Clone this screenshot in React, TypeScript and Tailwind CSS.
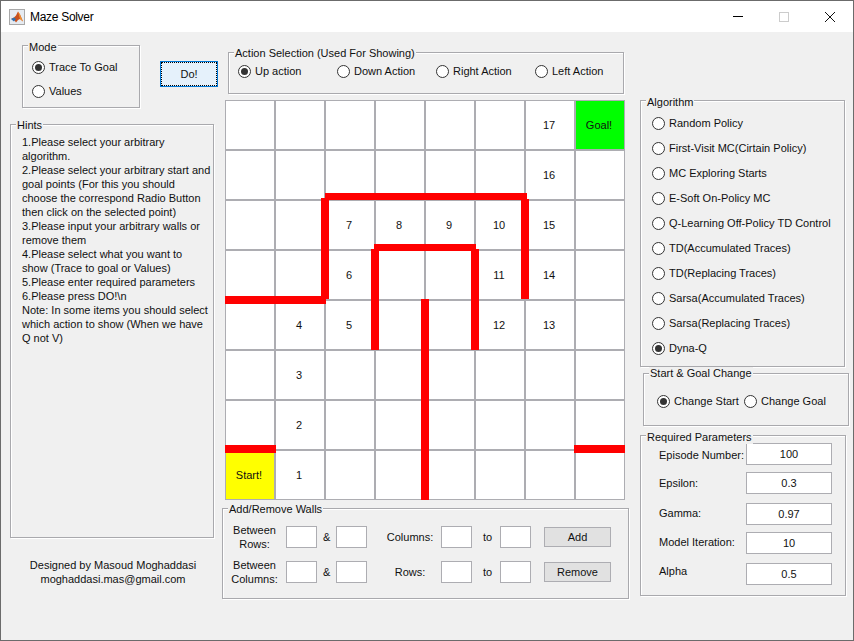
import type { ReactNode } from 'react';

const ALGORITHMS = [
  'Random Policy',
  'First-Visit MC(Cirtain Policy)',
  'MC Exploring Starts',
  'E-Soft On-Policy MC',
  'Q-Learning Off-Policy TD Control',
  'TD(Accumulated Traces)',
  'TD(Replacing Traces)',
  'Sarsa(Accumulated Traces)',
  'Sarsa(Replacing Traces)',
  'Dyna-Q',
];

const HINTS = [
  '1.Please select your arbitrary',
  'algorithm.',
  '2.Please select your arbitrary start and',
  'goal points (For this you should',
  'choose the correspond Radio Button',
  'then click on the selected point)',
  '3.Please input your arbitrary walls or',
  'remove them',
  '4.Please select what you want to',
  'show (Trace to goal or Values)',
  '5.Please enter required parameters',
  '6.Please press DO!\\n',
  'Note: In some items you should select',
  'which action to show (When we have',
  'Q not V)',
];

const PARAMS = [
  { label: 'Episode Number:', value: '100', row: 'h-[29px]', text: 'translate-y-px' },
  { label: 'Epsilon:', value: '0.3', row: 'h-[31px]', text: '' },
  { label: 'Gamma:', value: '0.97', row: 'h-[29px]', text: '-translate-y-px' },
  { label: 'Model Iteration:', value: '10', row: 'h-[31px]', text: '-translate-y-px' },
  { label: 'Alpha', value: '0.5', row: 'h-[22px]', text: '-translate-y-[3px]' },
];

const CELLS: Record<number, string> = {
  6: '17',
  7: 'Goal!',
  14: '16',
  18: '7',
  19: '8',
  20: '9',
  21: '10',
  22: '15',
  26: '6',
  29: '11',
  30: '14',
  33: '4',
  34: '5',
  37: '12',
  38: '13',
  41: '3',
  49: '2',
  56: 'Start!',
  57: '1',
};

// red walls drawn over the maze buttons, offsets from the grid corner
const WALLS = [
  { key: 'a', cls: 'left-[100px] top-[93px] w-[202px] h-[7px]' },
  { key: 'b', cls: 'left-[96px] top-[98px] w-2 h-[101px]' },
  { key: 'c', cls: 'left-0 top-[196px] w-[101px] h-2' },
  { key: 'd', cls: 'left-[296px] top-[99px] w-2 h-[100px]' },
  { key: 'e', cls: 'left-[149px] top-[144px] w-[102px] h-[7px]' },
  { key: 'f', cls: 'left-[146px] top-[149px] w-2 h-[101px]' },
  { key: 'g', cls: 'left-[246px] top-[149px] w-2 h-[101px]' },
  { key: 'h', cls: 'left-[196px] top-[199px] w-2 h-[201px]' },
  { key: 'i', cls: 'left-0 top-[345px] w-[51px] h-2' },
  { key: 'j', cls: 'left-[349px] top-[345px] w-[51px] h-2' },
];

function Panel({
  title,
  className,
  inner,
  drop,
  children,
}: {
  title: string;
  className: string;
  inner: string;
  drop: string;
  children: ReactNode;
}) {
  return (
    <fieldset className={`min-w-0 border border-[#a9a9ad] shadow-[1px_1px_0_#fff,inset_1px_1px_0_#fff] ${className}`}>
      <legend className={`ml-[5px] bg-[#f0f0f0] px-px text-[11px] leading-[13px] ${drop}`}>{title}</legend>
      <div className={inner}>{children}</div>
    </fieldset>
  );
}

function Radio({ label, checked, className = '' }: { label: string; checked?: boolean; className?: string }) {
  return (
    <div className={`flex items-center gap-[4px] ${className}`}>
      <span className="flex h-[13px] w-[13px] shrink-0 items-center justify-center rounded-full border border-[#333] bg-white">
        {checked && <span className="h-[7px] w-[7px] rounded-full bg-[#333]" />}
      </span>
      <span className="whitespace-nowrap">{label}</span>
    </div>
  );
}

function Box({ value = '', className = '' }: { value?: string; className?: string }) {
  return (
    <input
      readOnly
      value={value}
      className={`h-[22px] min-w-0 border border-[#adadb2] bg-white text-center text-[11px] outline-none ${className}`}
    />
  );
}

function Maze() {
  return (
    <div className="relative grid h-[400px] w-[400px] grid-cols-[repeat(8,50px)] grid-rows-[repeat(8,50px)]">
      {Array.from({ length: 64 }, (_, i) => {
        const text = CELLS[i] ?? '';
        const bg = text === 'Goal!' ? 'bg-[#00ff00]' : text === 'Start!' ? 'bg-[#ffff00]' : 'bg-white';
        return (
          <div key={i} className={`flex items-center justify-center border border-[#adadb2] pr-[2px] ${bg}`}>
            {text}
          </div>
        );
      })}
      {WALLS.map((w) => (
        <div key={w.key} className={`absolute bg-[#ff0000] ${w.cls}`} />
      ))}
    </div>
  );
}

function WallRow({ lines, second, button }: { lines: string[]; second: string; button: string }) {
  return (
    <div className="grid h-[22px] grid-cols-[63px_31px_19px_31px_74px_31px_28px_31px_13px_67px] items-center">
      <div className="text-center leading-[14px]">
        {lines.map((l) => (
          <div key={l}>{l}</div>
        ))}
      </div>
      <Box />
      <div className="pl-[6px]">&amp;</div>
      <Box />
      <div className="pl-3 text-center">{second}</div>
      <Box />
      <div className="pl-[11px]">to</div>
      <Box />
      <div />
      <div className="flex h-[20px] items-center justify-center border border-[#adadb2] bg-[#e1e1e1] pt-px">
        {button}
      </div>
    </div>
  );
}

export default function App() {
  return (
    <div
      className="flex h-[641px] w-[854px] flex-col overflow-hidden border border-[#6b6b6b] bg-[#f0f0f0] text-[11px] text-[#111]"
      style={{ fontFamily: '"Liberation Sans", Arial, sans-serif' }}
    >
      <div className="flex h-[31px] shrink-0 items-center bg-white pl-[8px]">
        <svg width="16" height="16" viewBox="0 0 16 16" className="shrink-0">
          <rect x="0.5" y="0.5" width="15" height="15" fill="#e6ebf1" stroke="#a8a8a8" />
          <path d="M2 10l3-1.5 2-2 2-4 2 3 3 7-3-2.5-2 1-2 2.5-2-3z" fill="#c8501e" />
          <path d="M2 10l3-1.5 2 1.5-2 2.5z" fill="#2f6fb0" />
          <path d="M9 2.5l2 3 3 7-3-2.5z" fill="#f09030" />
        </svg>
        <span className="ml-[5px] text-[12px] tracking-[-0.3px] text-black">Maze Solver</span>
        <div className="ml-auto flex items-center">
          <span className="mr-[36px] h-px w-[10px] bg-black" />
          <span className="mr-[36px] h-[10px] w-[10px] border border-[#ccc]" />
          <svg width="10" height="10" viewBox="0 0 10 10" className="mr-[18px]">
            <path d="M0 0l10 10M10 0L0 10" stroke="#111" strokeWidth="1" />
          </svg>
        </div>
      </div>

      <div className="flex flex-1">
        <div className="ml-[9px] w-[209px] shrink-0">
          <div className="ml-[12px] mt-[7px] flex items-start">
            <Panel title="Mode" drop="translate-y-[2px]" className="h-[69px] w-[118px]" inner="pl-[9px] pt-2">
              <Radio label="Trace To Goal" checked className="h-[14px]" />
              <Radio label="Values" className="mt-[10px] h-[14px]" />
            </Panel>
            <div className="ml-[20px] mt-[22px] flex h-[26px] w-[58px] shrink-0 items-center justify-center border border-[#0078d7] bg-[#e5f1fb] outline-1 -outline-offset-2 outline-black outline-dotted">
              Do!
            </div>
          </div>
          <Panel title="Hints" drop="translate-y-px" className="mt-[10px] h-[420px] w-[204px]" inner="pl-[11px] pt-[4px] leading-[14px]">
            {HINTS.map((h) => (
              <div key={h} className="whitespace-nowrap">
                {h}
              </div>
            ))}
          </Panel>
          <div className="mt-[20px] w-[206px] text-center leading-[14px]">
            <div>Designed by Masoud Moghaddasi</div>
            <div>moghaddasi.mas@gmail.com</div>
          </div>
        </div>

        <div className="ml-[3px] w-[408px] shrink-0">
          <Panel title="Action Selection (Used For Showing)" drop="translate-y-px" className="ml-[6px] mt-[14px] h-[48px] w-[396px]" inner="flex items-start pl-[9px] pt-[4px]">
            <Radio label="Up action" checked className="w-[99px]" />
            <Radio label="Down Action" className="w-[99px]" />
            <Radio label="Right Action" className="w-[99px]" />
            <Radio label="Left Action" />
          </Panel>
          <div className="ml-[3px] mt-[6px]">
            <Maze />
          </div>
          <Panel title="Add/Remove Walls" drop="translate-y-px" className="mt-[2px] h-[97px] w-[407px]" inner="pt-2">
            <WallRow lines={['Between', 'Rows:']} second="Columns:" button="Add" />
            <div className="mt-[13px]">
              <WallRow lines={['Between', 'Columns:']} second="Rows:" button="Remove" />
            </div>
          </Panel>
        </div>

        <div className="ml-[10px] flex-1">
          <Panel title="Algorithm" drop="translate-y-[2px]" className="mt-[62px] h-[273px] w-[205px]" inner="pl-[11px] pt-[9px]">
            {ALGORITHMS.map((a) => (
              <Radio key={a} label={a} checked={a === 'Dyna-Q'} className="mb-[11px] h-[14px]" />
            ))}
          </Panel>
          <Panel title="Start & Goal Change" drop="" className="ml-[3px] h-[59px] w-[206px]" inner="pl-[13px] pt-[13px]">
            <div className="flex">
              <Radio label="Change Start" checked className="w-[87px]" />
              <Radio label="Change Goal" />
            </div>
          </Panel>
          <Panel title="Required Parameters" drop="translate-y-[2px]" className="mt-[3px] h-[167px] w-[206px]" inner="pl-[18px] pt-px">
            {PARAMS.map((p) => (
              <div key={p.label} className={`flex items-start ${p.row}`}>
                <span className={`flex h-[22px] w-[87px] shrink-0 items-center ${p.text}`}>{p.label}</span>
                <Box value={p.value} className="w-[86px] shrink-0" />
              </div>
            ))}
          </Panel>
        </div>
      </div>
    </div>
  );
}
